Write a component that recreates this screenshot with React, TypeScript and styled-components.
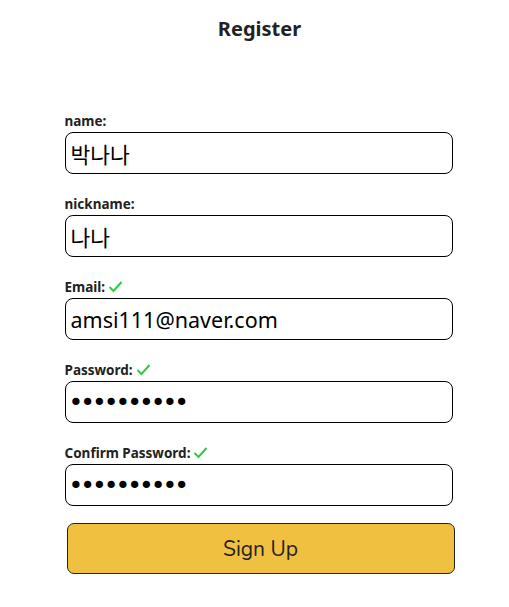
import React from "react";
import styled, { createGlobalStyle } from "styled-components";

const Global = createGlobalStyle`
  body { margin: 0; background: #fff; font-family: "Open Sans", "Noto Sans CJK KR", sans-serif; }
`;

const Page = styled.div`
  width: 509px;
  display: flex;
  flex-direction: column;
  align-items: center;
  padding-top: 15px;
`;

const Title = styled.h1`
  margin: 0;
  font-family: "Noto Sans", sans-serif;
  font-size: 20px;
  font-weight: 700;
  color: #222;
  line-height: 28px;
  transform: translateX(5px);
`;

const Form = styled.form`
  width: 390px;
  margin-left: 10px;
  margin-top: 68px;
  display: flex;
  flex-direction: column;
`;

const Field = styled.div`
  display: flex;
  flex-direction: column;
  margin-bottom: 20px;
  &:last-of-type { margin-bottom: 17px; }
`;

const Label = styled.label`
  display: flex;
  align-items: center;
  gap: 3px;
  height: 19px;
  margin-bottom: 2px;
  font-family: "Noto Sans", sans-serif;
  font-size: 13.5px;
  font-weight: 700;
  color: #222;
`;

const Input = styled.input<{ $dots?: boolean }>`
  box-sizing: border-box;
  width: 388px;
  height: 42px;
  border: 1px solid #000;
  border-radius: 8px;
  padding: 0 ${(p) => (p.$dots ? "3px" : "5px")};
  font-family: ${(p) => (p.$dots ? '"DejaVu Sans", sans-serif' : '"Noto Sans", "Noto Sans CJK KR", sans-serif')};
  font-size: ${(p) => (p.$dots ? "25px" : "21.5px")};
  letter-spacing: ${(p) => (p.$dots ? "-3px" : "0")};
  color: #000;
  outline: none;
`;

const Button = styled.button`
  box-sizing: border-box;
  width: 388px;
  height: 51px;
  margin-left: 2px;
  background: #f0c040;
  border: 1px solid #222;
  border-radius: 7px;
  font-family: "Nunito", "Noto Sans", sans-serif;
  font-size: 21px;
  color: #222;
`;

const Check = () => (
  <svg width="15" height="13" viewBox="0 0 15 13">
    <path d="M1.5 7 L5.5 11 L13.5 2" fill="none" stroke="#2ecc40" strokeWidth="2" />
  </svg>
);

export default function App() {
  return (
    <>
      <Global />
      <Page>
        <Title>Register</Title>
        <Form onSubmit={(e) => e.preventDefault()}>
          <Field>
            <Label>name:</Label>
            <Input defaultValue="박나나" />
          </Field>
          <Field>
            <Label>nickname:</Label>
            <Input defaultValue="나나" />
          </Field>
          <Field>
            <Label>Email:<Check /></Label>
            <Input defaultValue="amsi111@naver.com" />
          </Field>
          <Field>
            <Label>Password:<Check /></Label>
            <Input $dots type="password" defaultValue="1234567890" />
          </Field>
          <Field>
            <Label>Confirm Password:<Check /></Label>
            <Input $dots type="password" defaultValue="1234567890" />
          </Field>
          <Button type="submit">Sign Up</Button>
        </Form>
      </Page>
    </>
  );
}
